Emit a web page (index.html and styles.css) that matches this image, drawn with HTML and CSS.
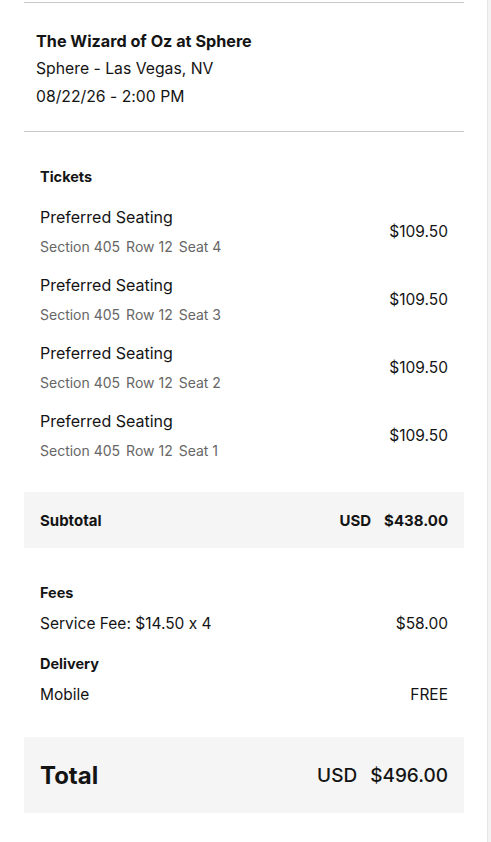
FILE: index.html
```html
<!DOCTYPE html>
<html>
<head>
<meta charset="utf-8">
<link rel="stylesheet" href="styles.css">
</head>
<body>
<div class="page">
  <main class="summary">
    <section class="event">
      <div class="event-title">The Wizard of Oz at Sphere</div>
      <div class="event-line">Sphere - Las Vegas, NV</div>
      <div class="event-line">08/22/26 - 2:00 PM</div>
    </section>

    <section class="tickets">
      <div class="label">Tickets</div>
      <div class="ticket">
        <div class="ticket-info">
          <div class="ticket-name">Preferred Seating</div>
          <div class="ticket-seat"><span>Section 405</span><span>Row 12</span><span>Seat 4</span></div>
        </div>
        <div class="price">$109.50</div>
      </div>
      <div class="ticket">
        <div class="ticket-info">
          <div class="ticket-name">Preferred Seating</div>
          <div class="ticket-seat"><span>Section 405</span><span>Row 12</span><span>Seat 3</span></div>
        </div>
        <div class="price">$109.50</div>
      </div>
      <div class="ticket">
        <div class="ticket-info">
          <div class="ticket-name">Preferred Seating</div>
          <div class="ticket-seat"><span>Section 405</span><span>Row 12</span><span>Seat 2</span></div>
        </div>
        <div class="price">$109.50</div>
      </div>
      <div class="ticket">
        <div class="ticket-info">
          <div class="ticket-name">Preferred Seating</div>
          <div class="ticket-seat"><span>Section 405</span><span>Row 12</span><span>Seat 1</span></div>
        </div>
        <div class="price">$109.50</div>
      </div>
    </section>

    <div class="subtotal">
      <span class="sub-label">Subtotal</span>
      <span class="sub-amount"><span class="cur">USD</span><span>$438.00</span></span>
    </div>

    <section class="fees">
      <div class="label">Fees</div>
      <div class="fee-row"><span>Service Fee: $14.50 x 4</span><span>$58.00</span></div>
      <div class="label delivery">Delivery</div>
      <div class="fee-row"><span>Mobile</span><span>FREE</span></div>
    </section>

    <div class="total">
      <span class="total-label">Total</span>
      <span class="total-amount"><span class="cur">USD</span><span>$496.00</span></span>
    </div>
  </main>
  <div class="edge"></div>
</div>
</body>
</html>
```

FILE: styles.css
```css
* { box-sizing: border-box; }
html, body { margin: 0; padding: 0; background: #fff; }
body {
  font-family: "Inter", "Noto Sans", sans-serif;
  font-feature-settings: "calt" 0;
  color: #141414;
  font-size: 16px;
}
.page {
  display: flex;
  min-height: 842px;
}
.summary {
  width: 487px;
  padding: 2px 23px 0 24px;
}
.edge {
  width: 4px;
  background: #f3f3f3;
  border-left: 1px solid #e6e6e6;
}
.event {
  border-top: 1px solid #c8c8c8;
  border-bottom: 1px solid #c8c8c8;
  padding: 24px 12px 20px;
}
.event-title {
  font-weight: 700;
  font-size: 16.2px;
  line-height: 28px;
}
.event-line {
  font-size: 15.75px;
  line-height: 28px;
}
.tickets {
  padding: 33px 16px 0;
}
.label {
  font-weight: 700;
  font-size: 14.5px;
  line-height: 24px;
}
.ticket {
  display: flex;
  justify-content: space-between;
  align-items: center;
  margin-top: 16px;
}
.ticket + .ticket { margin-top: 16px; }
.ticket-name {
  font-size: 16px;
  line-height: 24px;
}
.ticket-seat {
  margin-top: 8px;
  font-size: 14px;
  line-height: 20px;
  color: #666;
  display: flex;
  gap: 6px;
}
.price {
  font-size: 15.5px;
}
.subtotal {
  margin-top: 31px;
  height: 56px;
  background: #f5f5f5;
  display: flex;
  justify-content: space-between;
  align-items: center;
  padding: 0 16px;
  font-weight: 700;
  font-size: 15px;
}
.sub-amount, .total-amount {
  display: flex;
  gap: 13px;
}
.fees {
  padding: 33px 16px 0;
}
.fee-row {
  display: flex;
  justify-content: space-between;
  font-size: 15.5px;
  line-height: 24px;
  margin-top: 7px;
}
.delivery { margin-top: 16px; }
.total {
  margin-top: 30px;
  height: 76px;
  background: #f5f5f5;
  display: flex;
  justify-content: space-between;
  align-items: center;
  padding: 0 16px;
}
.total-label {
  font-weight: 700;
  font-size: 24px;
}
.total-amount {
  font-weight: 500;
  font-size: 19px;
  gap: 13px;
}
```
